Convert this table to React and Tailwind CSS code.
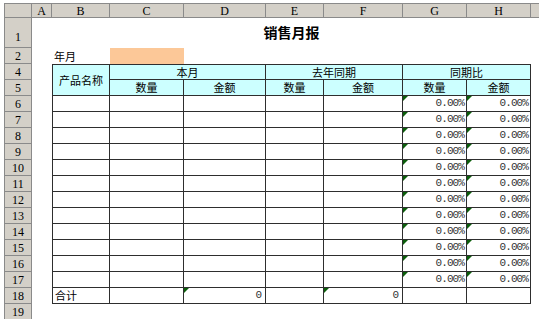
import React from "react";

const HDR = "bg-[#d4d0c8] border-[#8a8a8a] text-[12px] text-black font-['Liberation_Serif',serif] flex justify-center";
const B = "border-[#2e2e2e]";
const CY = "bg-[#ccffff]";

function Tri() {
  return <span className="absolute left-0 top-0 w-0 h-0 border-t-[5px] border-r-[5px] border-t-[#0b5e0b] border-r-transparent" />;
}

function RowHdr({ n, active, end }) {
  return (
    <div
      className={`${HDR} border-l border-r border-b ${end ? "items-end pb-[1px]" : "items-center"} ${active ? "bg-[#b9c2da] text-[#1c2a5a]" : ""}`}
    >
      {n}
    </div>
  );
}

function Pct() {
  return (
    <div className={`relative border-r border-b ${B} flex items-center justify-end pr-[2px] font-['Liberation_Mono',monospace] text-[11px] tracking-[-0.9px] text-[#333]`}>
      <Tri />
      0.00%
    </div>
  );
}

export default function App() {
  const dataRows = [6, 7, 8, 9, 10, 11, 12, 13, 14, 15, 16, 17];
  return (
    <div className="relative w-[539px] h-[319px] overflow-hidden bg-white pl-[4px] pt-[3px] font-['Noto_Sans_CJK_SC',sans-serif] text-[11px] text-[#1a1a1a]">
      <div className="grid grid-cols-[28px_20px_58px_74px_82px_58px_79px_64px_64px_1fr] grid-rows-[15px_30px_repeat(17,16px)]">
        {/* column header */}
        <div className={`${HDR} border-l border-t border-r border-b`} />
        {["A", "B", "C", "D", "E", "F", "G", "H"].map((c) => (
          <div key={c} className={`${HDR} items-center border-t border-r border-b`}>
            {c}
          </div>
        ))}
        <div className={`${HDR} border-t border-b`} />

        {/* row 1 */}
        <RowHdr n="1" end />
        <div />
        <div className="col-span-7 flex items-end justify-center pb-[5px] text-[14px] font-bold text-black">销售月报</div>
        <div />

        {/* row 2 */}
        <RowHdr n="2" />
        <div />
        <div className="flex items-center pl-[2px] text-black">年月</div>
        <div className="bg-[#fcc898]" />
        <div className="col-span-6" />

        {/* row 4 */}
        <RowHdr n="4" />
        <div />
        <div className={`row-span-2 ${CY} border ${B} flex items-center justify-center text-black`}>产品名称</div>
        <div className={`col-span-2 ${CY} border-t border-r border-b ${B} flex items-center justify-center text-black`}>本月</div>
        <div className={`col-span-2 ${CY} border-t border-r border-b ${B} flex items-center justify-center text-black`}>去年同期</div>
        <div className={`col-span-2 ${CY} border-t border-r border-b ${B} flex items-center justify-center text-black`}>同期比</div>
        <div />

        {/* row 5 */}
        <RowHdr n="5" />
        <div />
        {["数量", "金额", "数量", "金额", "数量", "金额"].map((t, i) => (
          <div key={i} className={`${CY} border-r border-b ${B} flex items-center justify-center text-black`}>
            {t}
          </div>
        ))}
        <div />

        {/* data rows */}
        {dataRows.map((r) => (
          <React.Fragment key={r}>
            <RowHdr n={String(r)} active={r === 14} />
            <div />
            <div className={`border-l border-r border-b ${B}`} />
            <div className={`border-r border-b ${B}`} />
            <div className={`border-r border-b ${B}`} />
            <div className={`border-r border-b ${B}`} />
            <div className={`border-r border-b ${B}`} />
            <Pct />
            <Pct />
            <div />
          </React.Fragment>
        ))}

        {/* row 18 */}
        <RowHdr n="18" />
        <div />
        <div className={`border-l border-r border-b ${B} flex items-center pl-[2px] text-black`}>合计</div>
        <div className={`border-r border-b ${B}`} />
        <div className={`relative border-r border-b ${B} flex items-center justify-end pr-[3px] font-['Liberation_Mono',monospace] text-[11px] text-[#333]`}>
          <Tri />0
        </div>
        <div className={`border-r border-b ${B}`} />
        <div className={`relative border-r border-b ${B} flex items-center justify-end pr-[3px] font-['Liberation_Mono',monospace] text-[11px] text-[#333]`}>
          <Tri />0
        </div>
        <div className={`border-r border-b ${B}`} />
        <div className={`border-r border-b ${B}`} />
        <div />

        {/* row 19 */}
        <RowHdr n="19" />
        <div className="col-span-9" />
      </div>
    </div>
  );
}
